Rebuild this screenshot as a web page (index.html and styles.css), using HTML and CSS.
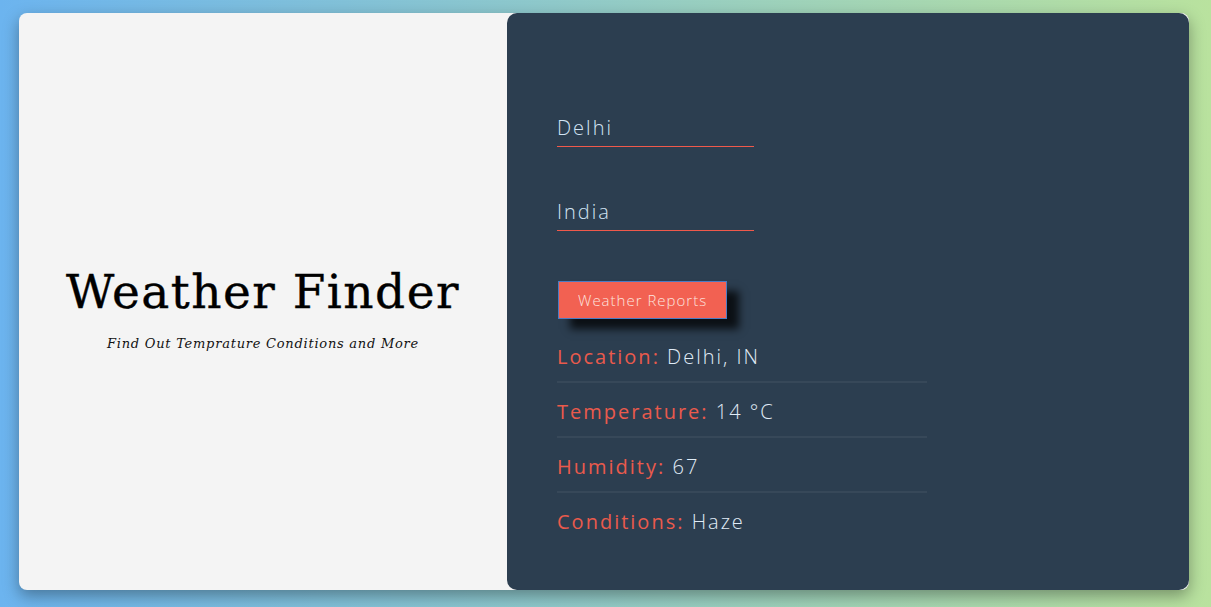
FILE: index.html
```html
<!DOCTYPE html>
<html lang="en">
<head>
  <meta charset="UTF-8">
  <meta name="viewport" content="width=device-width, initial-scale=1.0">
  <title>Weather Finder</title>
  <link rel="stylesheet" href="styles.css">
</head>
<body>
  <div class="container">
    <div class="title-side">
      <h1>Weather Finder</h1>
      <p class="tagline">Find Out Temprature Conditions and More</p>
    </div>

    <div class="form-side">
      <form id="weatherForm">
        <input type="text" name="city" value="Delhi" placeholder="City...">
        <input type="text" name="country" value="India" placeholder="Country...">
        <button type="submit">Weather Reports</button>
      </form>

      <div class="info">
        <p class="info-row"><span class="key">Location:</span> <span class="value">Delhi, IN</span></p>
        <p class="info-row"><span class="key">Temperature:</span> <span class="value">14 °C</span></p>
        <p class="info-row"><span class="key">Humidity:</span> <span class="value">67</span></p>
        <p class="info-row"><span class="key">Conditions:</span> <span class="value">Haze</span></p>
      </div>
    </div>
  </div>
</body>
</html>
```

FILE: styles.css
```css
body {
  margin: 0;
  height: 607px;
  background: linear-gradient(to right, #6cb4ef, #b9e29e);
  font-family: "Open Sans", sans-serif;
  overflow: hidden;
}

.container {
  width: 1170px;
  height: 577px;
  margin: 13px 0 0 19px;
  display: grid;
  grid-template-columns: 488px 1fr;
  background-color: #f4f4f4;
  border-radius: 8px;
  box-shadow: 0 6px 16px rgba(0, 0, 0, 0.35);
}

.title-side {
  display: flex;
  flex-direction: column;
  justify-content: center;
  align-items: center;
  padding-top: 12px;
}

.title-side h1 {
  font-family: "DejaVu Serif", serif;
  font-weight: normal;
  font-size: 47px;
  letter-spacing: 1.5px;
  color: #000;
  margin: 0 0 17px;
  -webkit-text-stroke: 0.4px #000;
}

.tagline {
  font-family: "DejaVu Serif", serif;
  font-style: italic;
  font-size: 13px;
  letter-spacing: 0.75px;
  color: #111;
  margin: 0;
}

.form-side {
  background-color: #2c3e50;
  border-radius: 10px;
  padding: 97px 50px 0;
}

#weatherForm {
  display: flex;
  flex-direction: column;
  align-items: flex-start;
}

#weatherForm input {
  width: 197px;
  box-sizing: border-box;
  background: transparent;
  border: none;
  border-bottom: 1px solid #f0594b;
  padding: 6px 0;
  line-height: 24px;
  font-family: "Open Sans", sans-serif;
  font-weight: 300;
  font-size: 20px;
  letter-spacing: 2px;
  color: #d2e4f4;
  outline: none;
  margin-bottom: 47px;
}

#weatherForm input:nth-child(2) {
  margin-bottom: 50px;
}

button {
  margin-left: 1px;
  height: 38px;
  padding: 0 19px;
  background-color: #f26152;
  border: 1px solid #4a7cc4;
  font-family: "Open Sans", sans-serif;
  font-weight: 300;
  font-size: 15px;
  letter-spacing: 1px;
  color: #fde3df;
  box-shadow: 12px 10px 8px rgba(0, 0, 0, 0.75);
  cursor: pointer;
}

.info {
  width: 370px;
  margin-top: 9px;
}

.info-row {
  margin: 0;
  padding: 14px 0 9px;
  line-height: 30px;
  font-size: 20px;
  font-weight: 300;
  letter-spacing: 2px;
  border-bottom: 2px solid #374859;
}

.info-row:last-child {
  border-bottom: none;
}

.key {
  color: #ea5a4c;
  font-weight: 400;
}

.value {
  color: #e0ecf7;
}
```
